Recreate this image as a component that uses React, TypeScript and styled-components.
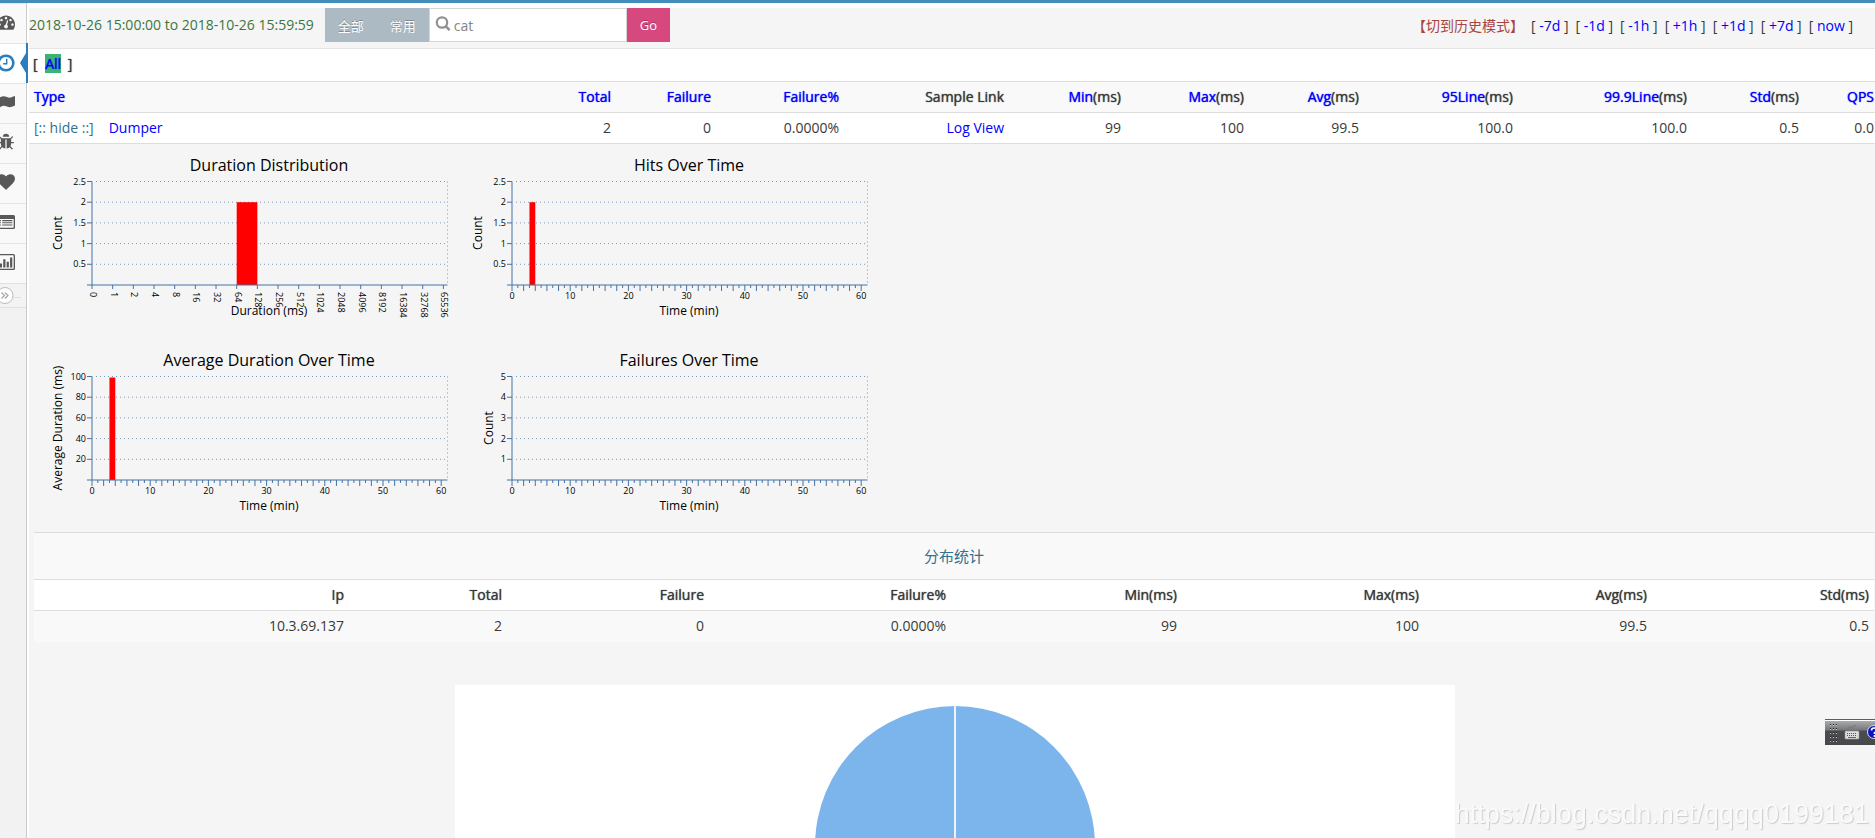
import React from "react";
import styled, { createGlobalStyle, css } from "styled-components";

const GlobalStyle = createGlobalStyle`
  *, *::before, *::after { box-sizing: border-box; }
  body {
    margin: 0;
    background: #fff;
    color: #393939;
    font-family: "Open Sans", "Noto Sans CJK SC", sans-serif;
    font-size: 14px;
    line-height: 20px;
  }
  a { color: #00f; text-decoration: none; }
  a:hover { text-decoration: underline; }
  button, input { font-family: inherit; }
`;

/* ---------- page frame ---------- */

const Page = styled.div`
  display: flex;
  flex-direction: column;
  height: 100vh;
  overflow: hidden;
`;

const TopStrip = styled.div`
  flex: none;
  height: 3px;
  background: #438eb9;
`;

const Body = styled.div`
  flex: 1;
  display: flex;
  min-height: 0;
`;

const Main = styled.main`
  flex: 1;
  min-width: 0;
  margin-left: 2px;
  padding-top: 5px;
  overflow: hidden;
`;

/* ---------- sidebar ---------- */

const Sidebar = styled.nav`
  flex: none;
  width: 27px;
  background: #f2f2f2;
  border-right: 1px solid #ccc;
`;

const SideList = styled.ul`
  list-style: none;
  margin: 0;
  padding: 0;
`;

const SideLink = styled.a<{ $active?: boolean }>`
  position: relative;
  display: flex;
  align-items: center;
  width: 26px;
  height: 40px;
  padding-bottom: ${(p) => (p.$active ? 2 : 4)}px;
  background: ${(p) => (p.$active ? "#fff" : "#f9f9f9")};
  color: ${(p) => (p.$active ? "#2b7dbc" : "#585858")};
  border-top: 1px solid #e5e5e5;

  svg {
    flex: none;
    width: ${(p) => (p.$active ? 20 : 18)}px;
    height: ${(p) => (p.$active ? 20 : 18)}px;
    margin-left: ${(p) => (p.$active ? -4 : -3)}px;
  }

  ${(p) =>
    p.$active &&
    css`
      &::before {
        content: "";
        position: absolute;
        top: 9px;
        right: 0;
        border: solid transparent;
        border-width: 10px 6px 10px 0;
        border-right-color: #2b7dbc;
      }
      &::after {
        content: "";
        position: absolute;
        top: -1px;
        right: -2px;
        width: 2px;
        height: 40px;
        background: #2b7dbc;
      }
    `}
`;

const SideToggle = styled.button`
  display: block;
  width: 26px;
  height: 25px;
  padding: 0;
  border: solid #e0e0e0;
  border-width: 1px 0;
  background: #f3f3f3;
  overflow: hidden;

  svg { display: block; }
`;

const fa: Record<string, string> = {
  dashboard:
    "M384 1152q0-53-37.5-90.5t-90.5-37.5-90.5 37.5-37.5 90.5 37.5 90.5 90.5 37.5 90.5-37.5 37.5-90.5zm192-448q0-53-37.5-90.5t-90.5-37.5-90.5 37.5-37.5 90.5 37.5 90.5 90.5 37.5 90.5-37.5 37.5-90.5zm428 481l101-382q6-26-7.5-48.5t-38.5-29.5-48 6.5-30 39.5l-101 382q-60 5-107 43.5t-63 98.5q-20 77 20 146t117 89 146-20 89-117q16-60-6-117t-72-91zm660-33q0-53-37.5-90.5t-90.5-37.5-90.5 37.5-37.5 90.5 37.5 90.5 90.5 37.5 90.5-37.5 37.5-90.5zm-640-640q0-53-37.5-90.5t-90.5-37.5-90.5 37.5-37.5 90.5 37.5 90.5 90.5 37.5 90.5-37.5 37.5-90.5zm448 192q0-53-37.5-90.5t-90.5-37.5-90.5 37.5-37.5 90.5 37.5 90.5 90.5 37.5 90.5-37.5 37.5-90.5zm320 448q0 261-141 483-19 29-54 29h-1402q-35 0-54-29-141-221-141-483 0-182 71-348t191-286 286-191 348-71 348 71 286 191 191 286 71 348z",
  clock:
    "M1024 544v448q0 14-9 23t-23 9h-320q-14 0-23-9t-9-23v-64q0-14 9-23t23-9h224v-352q0-14 9-23t23-9h64q14 0 23 9t9 23zm416 352q0-148-73-273t-198-198-273-73-273 73-198 198-73 273 73 273 198 198 273 73 273-73 198-198 73-273zm224 0q0 209-103 385.5t-279.5 279.5-385.5 103-385.5-103-279.5-279.5-103-385.5 103-385.5 279.5-279.5 385.5-103 385.5 103 279.5 279.5 103 385.5z",
  flag:
    "M0 350h130v1350h-130zM230 470q260-150 440-150 150 0 330 80 140 62 250 62 180 0 420-132 60-34 100-10 22 14 22 50v840q0 40-60 70-260 130-450 130-130 0-290-70-150-66-280-66-190 0-420 140-62 30-62-30z",
  bug:
    "M1696 960q0 26-19 45t-45 19h-224q0 171-67 290l208 209q19 19 19 45t-19 45q-18 19-45 19t-45-19l-198-197q-5 5-15 13t-42 28.5-65 36.5-82 29-97 13v-896h-128v896q-51 0-101.5-13.5t-87-33-66-39-43.5-32.5l-15-14-183 207q-20 21-48 21-24 0-43-16-19-18-20.5-44.5t15.5-46.5l202-227q-58-114-58-274h-224q-26 0-45-19t-19-45 19-45 45-19h224v-294l-173-173q-19-19-19-45t19-45 45-19 45 19l173 173h844l173-173q19-19 45-19t45 19 19 45-19 45l-173 173v294h224q26 0 45 19t19 45zm-480-576h-640q0-133 93.5-226.5t226.5-93.5 226.5 93.5 93.5 226.5z",
  heart:
    "M896 1664q-26 0-44-18l-624-602q-10-8-27.5-26t-55.5-65.5-68-97.5-53.5-121-23.5-138q0-220 127-344t351-124q62 0 126.5 21.5t120 58 95.5 68.5 76 68q36-36 76-68t95.5-68.5 120-58 126.5-21.5q224 0 351 124t127 344q0 221-229 450l-623 600q-18 18-44 18z",
  list:
    "M160 200h1472q160 0 160 160v1072q0 160-160 160h-1472q-160 0-160-160v-1072q0-160 160-160zm-30 400v820q0 40 40 40h1450q40 0 40-40v-820zM260 700h130v110h-130zM260 920h130v110h-130zM260 1140h130v110h-130zM520 700h1010v110h-1010zM520 920h1010v110h-1010zM520 1140h1010v110h-1010z",
  bars:
    "M160 100h1472q160 0 160 160v1272q0 160-160 160h-1472q-160 0-160-160v-1272q0-160 160-160zm10 130q-40 0-40 40v1250q0 40 40 40h1450q40 0 40-40v-1250q0-40-40-40zM280 1050h220v400h-220zM620 620h220v830h-220zM960 860h220v590h-220zM1300 440h220v1010h-220z",
};

const sideItems = [
  { icon: "dashboard", label: "Dashboard" },
  { icon: "clock", label: "Transaction", active: true },
  { icon: "flag", label: "Event" },
  { icon: "bug", label: "Problem" },
  { icon: "heart", label: "Heartbeat" },
  { icon: "list", label: "Cross" },
  { icon: "bars", label: "State" },
];

/* ---------- toolbar ---------- */

const Toolbar = styled.header`
  display: flex;
  align-items: flex-start;
  height: 41px;
  background: #f5f5f5;
  border-bottom: 1px solid #e5e5e5;
`;

const Period = styled.div`
  color: #3c763d;
  line-height: 34px;
  white-space: nowrap;
`;

const SearchForm = styled.form`
  display: flex;
  height: 34px;
  margin-left: 11px;
`;

const ToolButton = styled.button<{ $accent?: boolean }>`
  height: 34px;
  padding: 0 13px;
  border: 0;
  background: ${(p) => (p.$accent ? "#d6487e" : "#abbac3")};
  color: #fff;
  font-size: 13px;
  text-shadow: 0 -1px 0 rgba(0, 0, 0, 0.25);
  cursor: pointer;
`;

const SearchBox = styled.label`
  display: flex;
  align-items: flex-start;
  width: 198px;
  padding: 7px 5px;
  border: 1px solid #d5d5d5;
  background: #fff;

  svg { flex: none; }
`;

const SearchInput = styled.input`
  flex: 1;
  min-width: 0;
  height: 18px;
  margin-left: 3px;
  padding: 0;
  border: 0;
  outline: 0;
  background: none;
  color: #858585;
  font-size: 14px;
`;

const TimeNav = styled.nav`
  display: flex;
  gap: 7px;
  margin-left: auto;
  padding-right: 22px;
  line-height: 36px;
  white-space: nowrap;
`;

const HistoryLink = styled.a`
  color: #a94442;
`;

/* ---------- tables ---------- */

const heavy = css`
  font-weight: 400;
  text-shadow: 0 0 1px currentColor;
`;

const Filter = styled.div`
  ${heavy}
  height: 32px;
  padding: 5px 4px;
`;

const AllLink = styled.a`
  display: inline-block;
  height: 19px;
  margin: 0 3px 0 4px;
  background: #3cb371;
  line-height: 20px;
`;

const Table = styled.table`
  width: 100%;
  table-layout: fixed;
  border-collapse: collapse;
`;

const Col = styled.col<{ $share: number }>`
  width: ${(p) => p.$share}%;
`;

const cell = css`
  height: 31px;
  padding: 5px;
  border-top: 1px solid #ddd;
  text-align: right;
  vertical-align: top;
  white-space: nowrap;

  &:first-child { text-align: var(--lead, right); }
`;

const Th = styled.th`
  ${cell}
  ${heavy}
`;

const Td = styled.td`
  ${cell}
`;

const Tr = styled.tr<{ $bg: string }>`
  background: ${(p) => p.$bg};
`;

const SummaryTable = styled(Table)`
  --lead: left;
  border-bottom: 1px solid #ddd;

  th:last-child, td:last-child { padding-right: 1px; }
`;

const HideLink = styled.a`
  margin-right: 15px;
  color: #31708f;
`;

const Detail = styled.section`
  padding-left: 5px;
  background: #f5f5f5;
`;

const SpreadTable = styled(Table)`
  width: calc(100% - 1px);
`;

const SpreadTitle = styled.td`
  height: 47px;
  padding: 13px 5px;
  border-top: 1px solid #ddd;
  text-align: center;
  font-size: 15px;

  a { color: #31708f; }
`;

const ChartGrid = styled.div`
  display: grid;
  grid-template-columns: 420px 420px;
  row-gap: 2px;

  svg { display: block; }
`;

const PieCard = styled.div`
  width: 1000px;
  max-width: 100%;
  height: 400px;
  margin: 43px auto 0;
  background: #fff;

  svg { display: block; margin: 0 auto; }
`;

/* ---------- charts ---------- */

const TickText = styled.text`
  font-size: 9px;
  fill: #000;
`;

const AxisText = styled.text`
  font-size: 12px;
  fill: #000;
  text-anchor: middle;
`;

const TitleText = styled.text`
  font-size: 16px;
  fill: #000;
  text-anchor: middle;
`;

const plot = { left: 58, top: 37.5, right: 413.5, bottom: 141 };
const axisColor = "#4572a7";

interface ChartProps {
  title: string;
  xTitle: string;
  yTitle: string;
  yTitleX?: number;
  yMax: number;
  yLabels: string[];
  xLabels?: string[];
  bar?: { at: number; value: number };
}

function BarChart({ title, xTitle, yTitle, yTitleX = 28, yMax, yLabels, xLabels, bar }: ChartProps) {
  const height = plot.bottom - plot.top;
  const middle = Math.floor((plot.left + plot.right) / 2);
  const unit = xLabels ? 20.67 : 5.82;
  const yAt = (i: number) => plot.top + (height * i) / yLabels.length;
  return (
    <svg width="420" height="193" role="img" aria-label={title}>
      <TitleText x={middle} y="27">{title}</TitleText>
      {yLabels.map((label, i) => (
        <g key={label}>
          <line x1={plot.left + 4} x2={plot.right} y1={yAt(i)} y2={yAt(i)} stroke={axisColor} strokeOpacity="0.7" strokeDasharray="1 3" />
          <line x1={plot.left - 5} x2={plot.left} y1={yAt(i)} y2={yAt(i)} stroke={axisColor} />
          <TickText x="52" y={yAt(i) + 3} textAnchor="end">{label}</TickText>
        </g>
      ))}
      <line x1={plot.right} x2={plot.right} y1={plot.top} y2={plot.bottom} stroke={axisColor} strokeOpacity="0.7" strokeDasharray="1 3" />
      {xLabels
        ? xLabels.map((label, i) => {
            const x = plot.left + i * unit;
            return (
              <g key={label}>
                <line x1={x} x2={x} y1={plot.bottom} y2={plot.bottom + 4} stroke={axisColor} />
                <TickText transform={`translate(${x - 2} ${plot.bottom + 7}) rotate(90)`}>{label}</TickText>
              </g>
            );
          })
        : Array.from({ length: 61 }, (_, i) => {
            const x = plot.left + i * unit;
            return (
              <g key={i}>
                <line x1={x} x2={x} y1={plot.bottom} y2={plot.bottom + (i % 2 ? 3 : 6)} stroke={axisColor} />
                {i % 10 === 0 && <TickText x={x} y="155" textAnchor="middle">{i}</TickText>}
              </g>
            );
          })}
      {bar && (
        <rect
          x={plot.left + bar.at * unit}
          width={unit}
          y={plot.bottom - (height * bar.value) / yMax}
          height={(height * bar.value) / yMax}
          fill="#f00"
        />
      )}
      <line x1={plot.left} x2={plot.left} y1={plot.top} y2={plot.bottom} stroke={axisColor} />
      <line x1={plot.left - 5} x2={plot.right} y1={plot.bottom} y2={plot.bottom} stroke={axisColor} />
      <AxisText x={middle} y="171">{xTitle}</AxisText>
      <AxisText transform={`translate(${yTitleX} 89) rotate(-90)`}>{yTitle}</AxisText>
    </svg>
  );
}

const halves = ["2.5", "2", "1.5", "1", "0.5"];
const charts: ChartProps[] = [
  {
    title: "Duration Distribution",
    xTitle: "Duration (ms)",
    yTitle: "Count",
    yMax: 2.5,
    yLabels: halves,
    xLabels: ["0", "1", "2", "4", "8", "16", "32", "64", "128", "256", "512", "1024", "2048", "4096", "8192", "16384", "32768", "65536"],
    bar: { at: 7, value: 2 },
  },
  { title: "Hits Over Time", xTitle: "Time (min)", yTitle: "Count", yMax: 2.5, yLabels: halves, bar: { at: 3, value: 2 } },
  {
    title: "Average Duration Over Time",
    xTitle: "Time (min)",
    yTitle: "Average Duration (ms)",
    yMax: 100,
    yLabels: ["100", "80", "60", "40", "20"],
    bar: { at: 3, value: 99 },
  },
  { title: "Failures Over Time", xTitle: "Time (min)", yTitle: "Count", yTitleX: 39, yMax: 5, yLabels: ["5", "4", "3", "2", "1"] },
];

/* ---------- overlays ---------- */

const ImeBar = styled.div`
  position: fixed;
  right: 0;
  bottom: 93px;
  width: 50px;
  height: 26px;
  overflow: hidden;
  background: linear-gradient(#5b5d60 0 1px, #fff 1px 2px, #a9abad 2px, #75777a 11px, #4a4c50 12px, #47494d);

  svg { display: block; }
`;

const Watermark = styled.div`
  position: fixed;
  right: 6px;
  bottom: 8px;
  color: #fafafa;
  font-family: "Liberation Sans", sans-serif;
  font-size: 27px;
  line-height: 32px;
  text-shadow: 1px 1px 1px #ccc;
`;

/* ---------- data ---------- */

const timeLinks = ["-7d", "-1d", "-1h", "+1h", "+1d", "+7d", "now"];

const summary = [
  { name: "Total", unit: "", value: "2", width: 160 },
  { name: "Failure", unit: "", value: "0", width: 100 },
  { name: "Failure%", unit: "", value: "0.0000%", width: 128 },
  { name: "", unit: "Sample Link", value: "Log View", link: true, width: 165 },
  { name: "Min", unit: "(ms)", value: "99", width: 117 },
  { name: "Max", unit: "(ms)", value: "100", width: 123 },
  { name: "Avg", unit: "(ms)", value: "99.5", width: 115 },
  { name: "95Line", unit: "(ms)", value: "100.0", width: 154 },
  { name: "99.9Line", unit: "(ms)", value: "100.0", width: 174 },
  { name: "Std", unit: "(ms)", value: "0.5", width: 112 },
  { name: "QPS", unit: "", value: "0.0", width: 71 },
];
const typeWidth = 427;
const summaryTotal = summary.reduce((sum, c) => sum + c.width, typeWidth);

const spread = [
  { name: "Ip", value: "10.3.69.137", width: 315 },
  { name: "Total", value: "2", width: 158 },
  { name: "Failure", value: "0", width: 202 },
  { name: "Failure%", value: "0.0000%", width: 242 },
  { name: "Min(ms)", value: "99", width: 231 },
  { name: "Max(ms)", value: "100", width: 242 },
  { name: "Avg(ms)", value: "99.5", width: 228 },
  { name: "Std(ms)", value: "0.5", width: 222 },
];
const spreadTotal = spread.reduce((sum, c) => sum + c.width, 0);

export default function App() {
  return (
    <Page>
      <GlobalStyle />
      <TopStrip />
      <Body>
        <Sidebar aria-label="Reports">
          <SideList>
            {sideItems.map((item) => (
              <li key={item.icon}>
                <SideLink href="#" $active={item.active} aria-label={item.label}>
                  <svg viewBox="0 0 1792 1792" fill="currentColor" fillRule="evenodd" aria-hidden="true">
                    <path d={fa[item.icon]} />
                  </svg>
                </SideLink>
              </li>
            ))}
          </SideList>
          <SideToggle type="button" aria-label="Expand menu">
            <svg width="26" height="23" fill="none" aria-hidden="true">
              <line x1="0" x2="21" y1="13.5" y2="13.5" stroke="#e0e0e0" />
              <circle cx="5" cy="11.5" r="8" fill="#fff" stroke="#bbb" />
              <path d="M1.5 8.5l3 3-3 3M5 8.5l3 3-3 3" stroke="#aaa" strokeWidth="1.3" />
            </svg>
          </SideToggle>
        </Sidebar>

        <Main>
          <Toolbar>
            <Period>2018-10-26 15:00:00 to 2018-10-26 15:59:59</Period>
            <SearchForm onSubmit={(e: React.FormEvent) => e.preventDefault()}>
              <ToolButton type="button">全部</ToolButton>
              <ToolButton type="button">常用</ToolButton>
              <SearchBox>
                <svg width="16" height="16" fill="none" stroke="#909090" aria-hidden="true">
                  <circle cx="7" cy="6.5" r="5.2" strokeWidth="2.2" />
                  <path d="M10.6 10.2l4 4" strokeWidth="2.6" />
                </svg>
                <SearchInput type="text" defaultValue="cat" aria-label="Domain" />
              </SearchBox>
              <ToolButton type="submit" $accent>Go</ToolButton>
            </SearchForm>
            <TimeNav aria-label="Time range">
              <HistoryLink href="#">【切到历史模式】</HistoryLink>
              {timeLinks.map((label) => (
                <span key={label}>[ <a href="#">{label}</a> ]</span>
              ))}
            </TimeNav>
          </Toolbar>

          <Filter>[ <AllLink href="#">All</AllLink> ]</Filter>

          <SummaryTable>
            <colgroup>
              <Col $share={(typeWidth / summaryTotal) * 100} />
              {summary.map((c, i) => (
                <Col key={i} $share={(c.width / summaryTotal) * 100} />
              ))}
            </colgroup>
            <thead>
              <Tr $bg="#f9f9f9">
                <Th><a href="#">Type</a></Th>
                {summary.map((c, i) => (
                  <Th key={i}>
                    {c.name && <a href="#">{c.name}</a>}
                    {c.unit}
                  </Th>
                ))}
              </Tr>
            </thead>
            <tbody>
              <Tr $bg="#fff">
                <Td><HideLink href="#">[:: hide ::]</HideLink><a href="#">Dumper</a></Td>
                {summary.map((c, i) => (
                  <Td key={i}>{c.link ? <a href="#">{c.value}</a> : c.value}</Td>
                ))}
              </Tr>
            </tbody>
          </SummaryTable>

          <Detail>
            <ChartGrid>
              {charts.map((chart) => (
                <BarChart key={chart.title} {...chart} />
              ))}
            </ChartGrid>

            <SpreadTable>
              <colgroup>
                {spread.map((c) => (
                  <Col key={c.name} $share={(c.width / spreadTotal) * 100} />
                ))}
              </colgroup>
              <tbody>
                <Tr $bg="#f9f9f9">
                  <SpreadTitle colSpan={spread.length}><a href="#">分布统计</a></SpreadTitle>
                </Tr>
                <Tr $bg="#fff">
                  {spread.map((c) => (
                    <Th key={c.name} scope="col">{c.name}</Th>
                  ))}
                </Tr>
                <Tr $bg="#f9f9f9">
                  {spread.map((c) => (
                    <Td key={c.name}>{c.value}</Td>
                  ))}
                </Tr>
              </tbody>
            </SpreadTable>

            <PieCard>
              <svg width="300" height="310" role="img" aria-label="Distribution by IP">
                <circle cx="150" cy="161" r="140" fill="#7cb5ec" />
                <line x1="150" x2="150" y1="20" y2="161" stroke="#fff" strokeWidth="2" strokeOpacity="0.85" />
              </svg>
            </PieCard>
          </Detail>
        </Main>
      </Body>

      <ImeBar>
        <svg width="50" height="26" aria-hidden="true">
          {[6, 10, 14, 18, 22].map((y) =>
            [5, 8, 11].map((x) => (
              <g key={`${x}-${y}`}>
                <rect x={x} y={y - 1} width="1" height="1" fill="#222" />
                <rect x={x} y={y} width="1" height="1" fill="#ccc" />
              </g>
            ))
          )}
          <path d="M22 11q1-3 4-3t5-2" fill="none" stroke="#777" />
          <rect x="20" y="12" width="14" height="8" rx="1" fill="#ddd" stroke="#999" strokeWidth="0.6" />
          <path d="M22 14.5h10M22 16.5h10" stroke="#555" strokeDasharray="1 1" />
          <path d="M23 18.5h8" stroke="#666" />
          <circle cx="49" cy="13" r="6.5" fill="#0a12c8" stroke="#ddd" />
          <path d="M46.5 11.5q0-2.500 2.5-2.500t2.500 2-2 2.500v1.500M49.500 16v2" fill="none" stroke="#fff" strokeWidth="1.6" />
        </svg>
      </ImeBar>
      <Watermark>https://blog.csdn.net/qqqq0199181</Watermark>
    </Page>
  );
}
